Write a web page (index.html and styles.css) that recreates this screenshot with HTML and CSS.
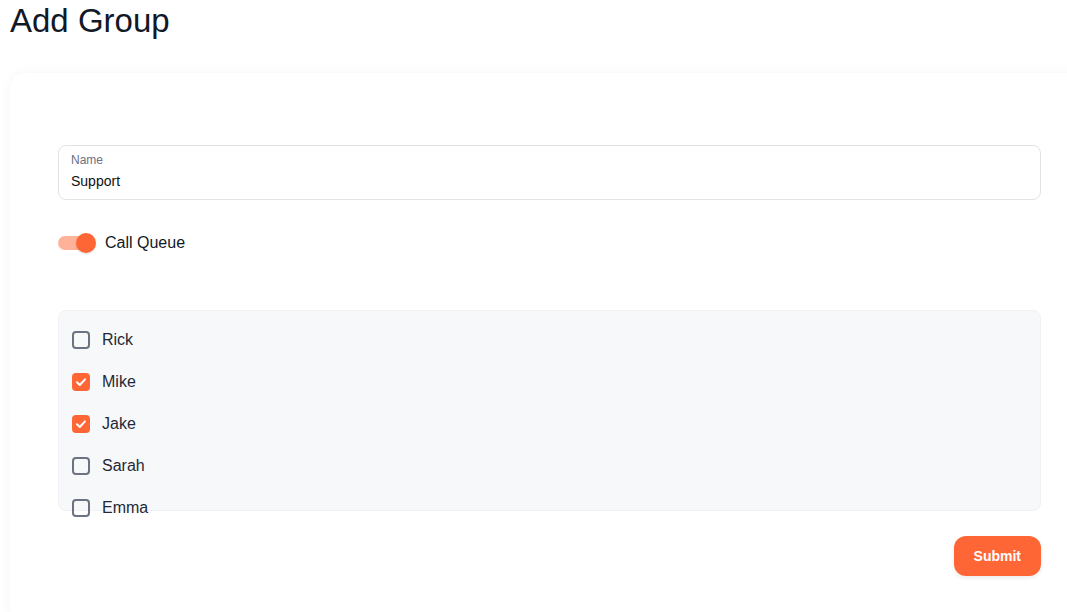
FILE: index.html
```html
<!DOCTYPE html>
<html lang="en">
<head>
<meta charset="utf-8">
<title>Add Group</title>
<link rel="stylesheet" href="styles.css">
</head>
<body>
<div class="page">
  <h1 class="title">Add Group</h1>
  <div class="card">
    <div class="field">
      <label class="field-label">Name</label>
      <div class="field-value">Support</div>
    </div>
    <div class="toggle-row">
      <span class="switch">
        <span class="switch-track"></span>
        <span class="switch-thumb"></span>
      </span>
      <span class="toggle-label">Call Queue</span>
    </div>
    <div class="members">
      <div class="member">
        <span class="box"></span><span class="member-name">Rick</span>
      </div>
      <div class="member">
        <span class="box checked"><svg viewBox="0 0 18 18" width="18" height="18"><polyline points="5,9.3 7.8,12 13,6.4" fill="none" stroke="#fff" stroke-width="2" stroke-linecap="round" stroke-linejoin="round"/></svg></span><span class="member-name">Mike</span>
      </div>
      <div class="member">
        <span class="box checked"><svg viewBox="0 0 18 18" width="18" height="18"><polyline points="5,9.3 7.8,12 13,6.4" fill="none" stroke="#fff" stroke-width="2" stroke-linecap="round" stroke-linejoin="round"/></svg></span><span class="member-name">Jake</span>
      </div>
      <div class="member">
        <span class="box"></span><span class="member-name">Sarah</span>
      </div>
      <div class="member">
        <span class="box"></span><span class="member-name">Emma</span>
      </div>
    </div>
    <div class="actions">
      <button class="submit" type="button">Submit</button>
    </div>
  </div>
</div>
</body>
</html>
```

FILE: styles.css
```css
html, body {
  margin: 0;
  padding: 0;
  background: #ffffff;
  overflow: hidden;
}
body {
  font-family: "Liberation Sans", Arial, sans-serif;
  color: #111827;
}
.page {
  padding: 0 0 0 10px;
}
.title {
  margin: 2px 0 0;
  font-size: 33px;
  line-height: 38px;
  font-weight: 400;
  color: #111827;
}
.card {
  margin-top: 33px;
  margin-right: -30px;
  background: #fff;
  border-radius: 16px;
  box-shadow: 0 0 14px rgba(0, 0, 0, 0.045);
  padding: 72px 56px 40px 48px;
  display: flex;
  flex-direction: column;
  min-height: 440px;
}
.field {
  height: 55px;
  box-sizing: border-box;
  border: 1px solid #e2e3e6;
  border-radius: 8px;
  padding: 7px 12px 0;
  display: flex;
  flex-direction: column;
}
.field-label {
  font-size: 12px;
  line-height: 14px;
  color: #6b7280;
}
.field-value {
  margin-top: 6px;
  font-size: 14px;
  line-height: 16px;
  color: #111;
}
.toggle-row {
  margin-top: 24px;
  height: 38px;
  display: flex;
  align-items: center;
}
.switch {
  position: relative;
  width: 38px;
  height: 20px;
  display: inline-block;
}
.switch-track {
  position: absolute;
  left: 0;
  top: 3px;
  width: 34px;
  height: 14px;
  border-radius: 7px;
  background: #ffb29a;
}
.switch-thumb {
  position: absolute;
  left: 18px;
  top: 0;
  width: 20px;
  height: 20px;
  border-radius: 50%;
  background: #ff6636;
  box-shadow: 0 1px 2px rgba(0, 0, 0, 0.15);
}
.toggle-label {
  margin-left: 9px;
  font-size: 16px;
  color: #111827;
}
.members {
  margin-top: 48px;
  height: 201px;
  box-sizing: border-box;
  background: #f7f8fa;
  border: 1px solid #eff1f4;
  border-radius: 8px;
  padding: 8px 13px 0;
  display: flex;
  flex-direction: column;
}
.member {
  flex: none;
  height: 42px;
  display: flex;
  align-items: center;
}
.box {
  width: 18px;
  height: 18px;
  box-sizing: border-box;
  border: 2px solid #6b7280;
  border-radius: 4px;
  display: inline-flex;
  align-items: center;
  justify-content: center;
}
.box.checked {
  border: none;
  background: #ff6636;
}
.box svg {
  display: block;
}
.member-name {
  margin-left: 12px;
  font-size: 16px;
  color: #1f2937;
}
.actions {
  margin-top: 25px;
  display: flex;
  justify-content: flex-end;
}
.submit {
  height: 40px;
  padding: 0 20px;
  border: none;
  border-radius: 12px;
  background: #ff6636;
  color: #fff;
  font-family: "Liberation Sans", Arial, sans-serif;
  font-size: 14px;
  font-weight: 700;
  box-shadow: 0 2px 4px rgba(0, 0, 0, 0.08);
  cursor: pointer;
}
```
